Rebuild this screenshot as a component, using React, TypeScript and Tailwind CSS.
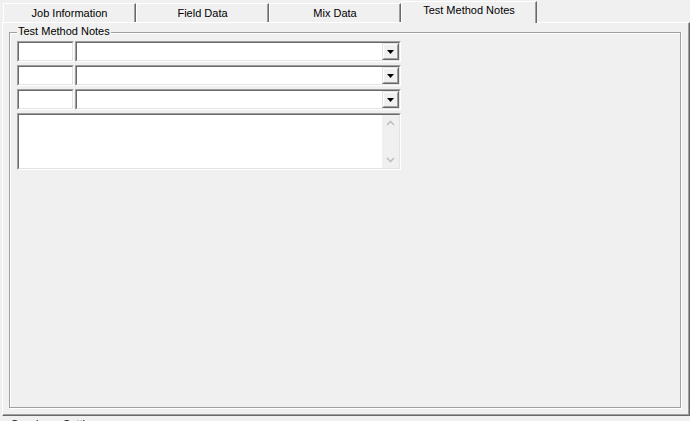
import React from "react";

function Sunken({ className, children }: { className: string; children?: React.ReactNode }) {
  return (
    <div className={`border border-t-[#a0a0a0] border-l-[#a0a0a0] border-b-white border-r-white ${className}`}>
      <div className="h-full w-full border border-t-[#696969] border-l-[#696969] border-b-[#e3e3e3] border-r-[#e3e3e3] bg-white flex justify-end">
        {children}
      </div>
    </div>
  );
}

function DropButton() {
  return (
    <div className="h-[17px] w-[17px] border border-t-[#e3e3e3] border-l-[#e3e3e3] border-b-[#696969] border-r-[#696969] bg-[#f0f0f0]">
      <div className="flex h-full w-full items-center justify-center border border-t-white border-l-white border-b-[#a0a0a0] border-r-[#a0a0a0]">
        <svg width="7" height="4" viewBox="0 0 7 4" className="mt-[1px]">
          <polygon points="0,0 7,0 3.5,4" fill="#000" />
        </svg>
      </div>
    </div>
  );
}

function Row() {
  return (
    <div className="flex gap-[1px]">
      <Sunken className="h-[21px] w-[57px]" />
      <Sunken className="h-[21px] w-[326px]">
        <DropButton />
      </Sunken>
    </div>
  );
}

function Tab({ label, w, active }: { label: string; w: string; active?: boolean }) {
  if (active) {
    return (
      <div
        className={`relative z-10 mt-[1px] flex h-[22px] ${w} justify-center border-l border-t border-r border-l-white border-t-white border-r-[#696969] bg-[#f0f0f0] pt-[2px] shadow-[inset_-1px_0_0_#a0a0a0]`}
      >
        <span className="leading-[13px]">{label}</span>
      </div>
    );
  }
  return (
    <div
      className={`mt-[3px] flex h-[19px] ${w} justify-center border-l border-t border-r border-l-white border-t-white border-r-[#696969] bg-[#f0f0f0] pt-[3px] shadow-[inset_-1px_0_0_#a0a0a0]`}
    >
      <span className="leading-[13px]">{label}</span>
    </div>
  );
}

export default function App() {
  return (
    <div
      className="h-[421px] w-[690px] overflow-hidden bg-[#f0f0f0] text-[11px] text-black"
      style={{ fontFamily: '"Liberation Sans", Arial, sans-serif' }}
    >
      <div className="relative z-10 flex h-[22px] pl-[3px]">
        <Tab label="Job Information" w="w-[133px]" />
        <Tab label="Field Data" w="w-[133px]" />
        <Tab label="Mix Data" w="w-[132px]" />
        <Tab label="Test Method Notes" w="w-[136px]" active />
      </div>
      <div className="ml-[2px] h-[394px] w-[688px] border border-t-white border-l-white border-b-[#696969] border-r-[#696969] pl-[6px] pt-[9px] shadow-[inset_-1px_-1px_0_#a0a0a0]">
        <div className="relative h-[376px] w-[672px] border border-[#a0a0a0] pl-[7px] pt-[8px] shadow-[1px_1px_0_#fff,inset_1px_1px_0_#fff]">
          <div className="absolute left-[7px] top-[-8px] bg-[#f0f0f0] px-[1px] leading-[13px]">Test Method Notes</div>
          <div className="flex flex-col gap-[3px]">
            <Row />
            <Row />
            <Row />
            <Sunken className="h-[57px] w-[384px]">
              <div className="flex h-full w-[17px] flex-col items-center justify-between bg-[#f0f0f0] py-[5px]">
                <svg width="9" height="6" viewBox="0 0 9 6">
                  <polyline points="1,5 4.5,1.5 8,5" fill="none" stroke="#bfbfbf" strokeWidth="1.6" />
                </svg>
                <svg width="9" height="6" viewBox="0 0 9 6">
                  <polyline points="1,1 4.5,4.5 8,1" fill="none" stroke="#bfbfbf" strokeWidth="1.6" />
                </svg>
              </div>
            </Sunken>
          </div>
        </div>
      </div>
      <div className="ml-[11px] mt-[2px] leading-[13px]">Specimen Settings</div>
    </div>
  );
}
